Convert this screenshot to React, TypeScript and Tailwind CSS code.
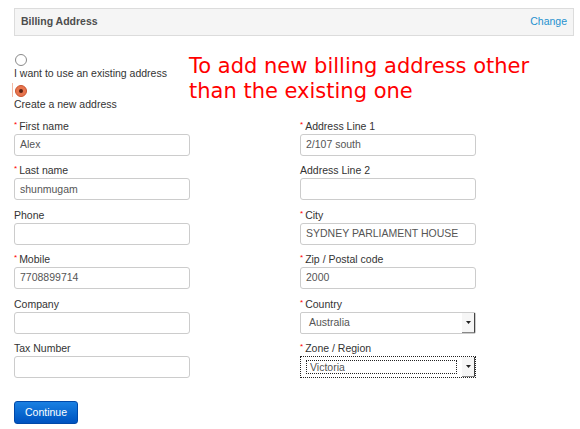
import React from 'react';

// Field definitions for the two columns
type Field = {
    label: string;
    required?: boolean;
    value?: string;
    select?: 'plain' | 'focused';
};

const leftFields: Field[] = [
    { label: 'First name', required: true, value: 'Alex' },
    { label: 'Last name', required: true, value: 'shunmugam' },
    { label: 'Phone' },
    { label: 'Mobile', required: true, value: '7708899714' },
    { label: 'Company' },
    { label: 'Tax Number' },
];

const rightFields: Field[] = [
    { label: 'Address Line 1', required: true, value: '2/107 south' },
    { label: 'Address Line 2' },
    { label: 'City', required: true, value: 'SYDNEY PARLIAMENT HOUSE' },
    { label: 'Zip / Postal code', required: true, value: '2000' },
    { label: 'Country', required: true, value: 'Australia', select: 'plain' },
    { label: 'Zone / Region', required: true, value: 'Victoria', select: 'focused' },
];

// Small down arrow used on the select boxes
function SelectArrow() {
    return (
        <div className="w-[13px] self-stretch bg-[#f6f6f6] border-r border-b border-r-[#444] border-b-[#888] flex items-center justify-center">
            <svg width="5" height="3" viewBox="0 0 5 3">
                <path d="M0 0 H5 L2.5 3 Z" fill="#222" />
            </svg>
        </div>
    );
}

function FieldRow({ field }: { field: Field }) {
    return (
        <div className="mb-[7.4px]">
            <label className="flex items-start leading-[15px] text-[10.5px] text-[#333]">
                {field.required && (
                    <span className="text-[#f00] text-[8px] leading-[10px] mr-[2px] mt-[1px]">*</span>
                )}
                {field.label}
            </label>

            {field.select === 'plain' && (
                <div className="w-[176px] h-[22px] border border-[#ccc] rounded-[2px] bg-white flex items-center">
                    <span className="flex-1 pl-[8px] text-[10.5px] text-[#555]">{field.value}</span>
                    <SelectArrow />
                </div>
            )}

            {field.select === 'focused' && (
                <div className="w-[176px] h-[22px] border border-dotted border-[#222] bg-white flex items-center">
                    <div className="flex-1 ml-[5px] mr-[5px] h-[14px] border border-dotted border-[#222] flex items-center">
                        <span className="pl-[3px] text-[10.5px] text-[#555] leading-[12px]">{field.value}</span>
                    </div>
                    <SelectArrow />
                </div>
            )}

            {!field.select && (
                <div className="w-[176px] h-[22px] border border-[#ccc] rounded-[3px] bg-white flex items-center pl-[5px] text-[10.5px] text-[#555]">
                    {field.value}
                </div>
            )}
        </div>
    );
}

function App() {
    return (
        <div className="w-[580px] h-[429px] bg-white overflow-hidden pl-[14px] pr-[6px] pt-[8px] font-['Liberation_Sans',Arial,sans-serif]">
            {/* Header bar */}
            <div className="h-[28px] bg-[#f5f5f5] border border-[#dcdcdc] flex items-center justify-between pl-[6px] pr-[6px]">
                <span className="text-[10.5px] font-bold text-[#4d4d4d]">Billing Address</span>
                <span className="text-[10.5px] text-[#1e91cf]">Change</span>
            </div>

            {/* Radios + annotation */}
            <div className="mt-[18px] flex items-start">
                <div className="w-[175px] text-[10.5px] text-[#333]">
                    <div className="ml-[1px] w-[12px] h-[12px] rounded-full border border-[#8a8a8a] bg-white" />
                    <div className="leading-[14px]">I want to use an existing address</div>
                    <div className="mt-[5px] flex items-center relative">
                        <span className="absolute left-[-2px] top-[-2px] w-[1px] h-[14px] bg-[#f3b9a5]" />
                        <div className="ml-[1px] w-[12px] h-[12px] rounded-full border border-[#c9542f] bg-[#e8754e] flex items-center justify-center">
                            <div className="w-[4px] h-[4px] rounded-full bg-[#5a2314]" />
                        </div>
                    </div>
                    <div className="leading-[14px]">Create a new address</div>
                </div>
                <div className="font-['DejaVu_Sans',sans-serif] text-[21px] leading-[25px] text-[#ff0000] -mt-[0.5px]">
                    To add new billing address other
                    <br />
                    than the existing one
                </div>
            </div>

            {/* Form columns */}
            <div className="mt-[8px] grid grid-cols-[286px_1fr]">
                <div>
                    {leftFields.map((f) => (
                        <FieldRow key={f.label} field={f} />
                    ))}
                </div>
                <div>
                    {rightFields.map((f) => (
                        <FieldRow key={f.label} field={f} />
                    ))}
                </div>
            </div>

            {/* Submit */}
            <button className="mt-[15.6px] w-[64px] h-[23px] rounded-[3px] border border-[#0048a8] bg-gradient-to-b from-[#1a80e2] to-[#0052c0] text-white text-[10.5px] flex items-center justify-center">
                Continue
            </button>
        </div>
    );
}

export default App;
